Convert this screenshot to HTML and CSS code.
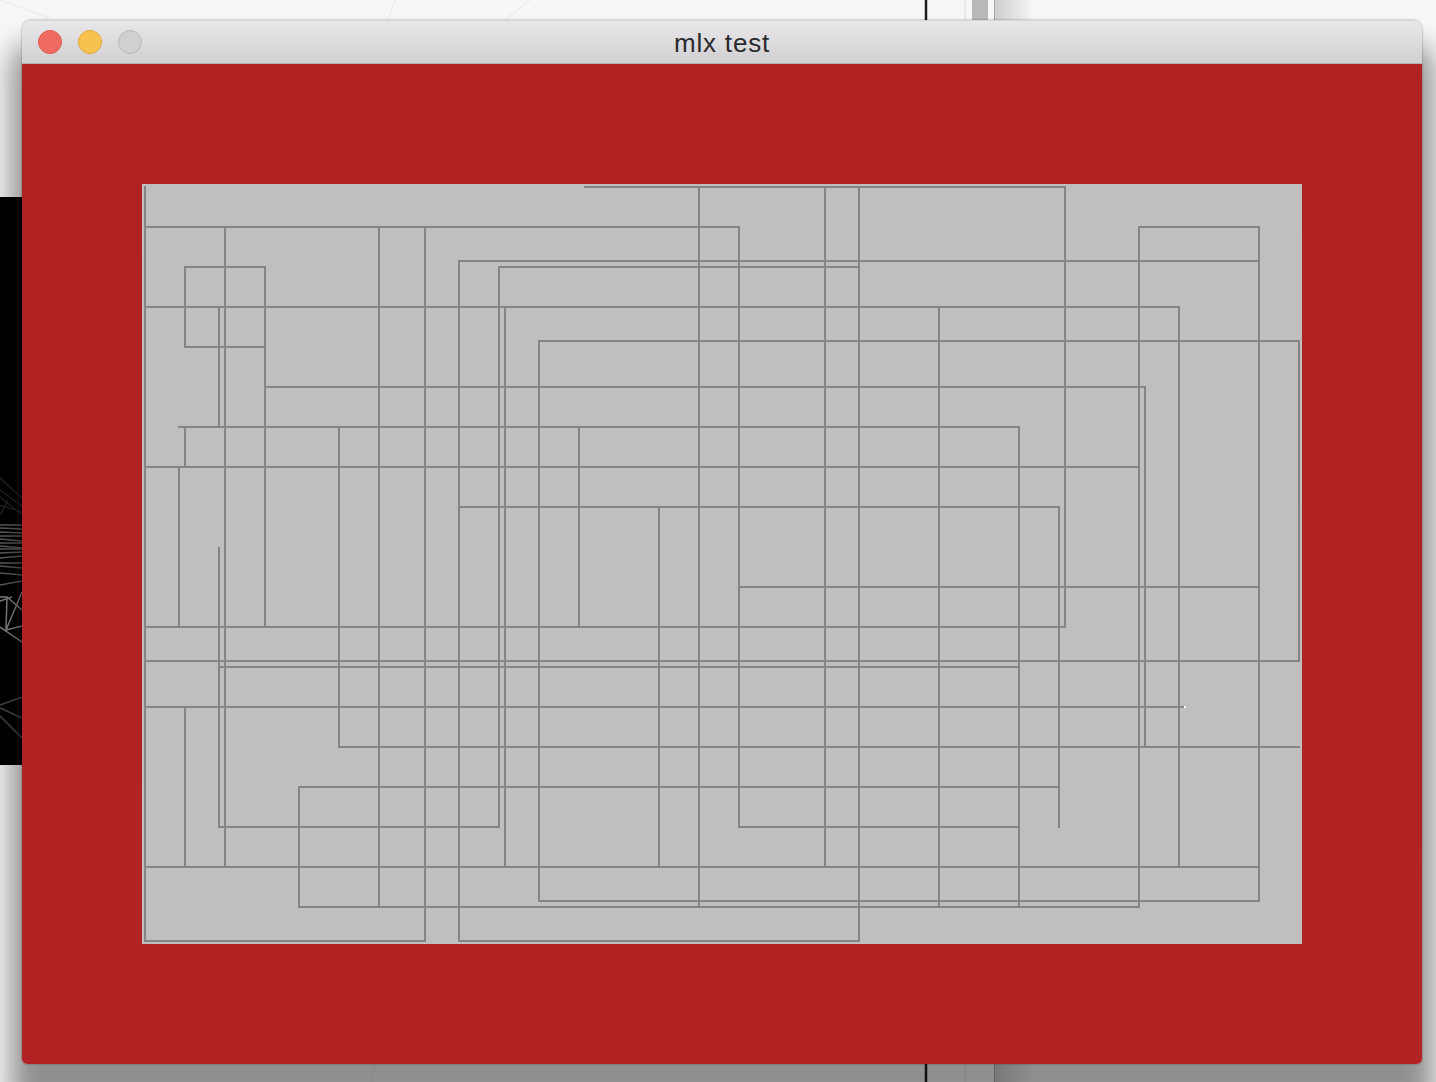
FILE: index.html
```html
<!DOCTYPE html>
<html lang="en">
<head>
<meta charset="utf-8">
<title>mlx test</title>
<link rel="stylesheet" href="styles.css">
</head>
<body>
<div class="desktop">
  <svg class="wallpaper" width="1436" height="1082" viewBox="0 0 1436 1082" aria-hidden="true">
    <path class="faint" d="M0 0L50 18M395 0L388 20M530 0L505 20M375 1064L372 1082"/>
    <rect class="bar" x="972" y="0" width="16" height="20"/>
    <path class="pale" d="M965 0V20M965 1064V1082"/>
    <path class="edge" d="M994.5 0V20M994.5 1064V1082"/>
    <path class="rule" d="M926 0V20M926 1064V1082"/>
    <rect class="night" x="0" y="197" width="22" height="568"/>
    <g class="wires">
      <path class="w1" d="M0 478L22 498M0 490L22 506M0 505L22 512M0 515L8 500M0 497L22 515"/>
      <path class="w2" d="M0 525H22M0 528L22 529M0 532L22 533M0 536H22M0 539L22 541M0 543H22M0 546L22 548M0 549H22M0 553L22 552M0 558L22 556M0 563H22M0 566L22 568M0 573L22 575M0 585L22 581"/>
      <path class="w3" d="M0 597H7L22 610M7 597L6 630L22 592M6 630L22 626M0 627L22 642M0 601L12 597"/>
      <path class="w4" d="M0 705L22 697M0 708L22 718M0 716L22 738"/>
    </g>
  </svg>
  <div class="fade fade-top"></div>
  <div class="fade fade-bottom"></div>
  <main class="window">
    <header class="titlebar">
      <div class="lights">
        <span class="light close"></span>
        <span class="light minimize"></span>
        <span class="light zoom"></span>
      </div>
      <h1 class="title">mlx test</h1>
    </header>
    <div class="content">
      <div class="canvas">
        <svg class="maze" width="1160" height="760" viewBox="142 184 1160 760" role="img" aria-label="maze">
          <path class="walls" d="M584 187H1066M144 227H740M1138 227H1260M458 261H1260M184 267H266M498 267H860M144 307H1180M538 341H1300M184 347H266M264 387H1146M178 427H1020M144 467H1140M458 507H1060M738 587H1260M144 627H1066M144 661H1300M218 667H1020M144 707H1184M338 747H1300M298 787H1060M218 827H500M738 827H1020M144 867H1260M538 901H1260M298 907H1140M144 941H426M458 941H860M145 186V942M179 467V627M185 267V347M185 427V467M185 707V867M219 307V427M219 547V828M225 227V867M265 267V627M299 786V908M339 427V748M379 227V907M425 227V942M459 261V942M499 266V828M505 307V867M539 340V902M579 427V627M659 507V867M699 187V907M739 226V828M825 187V867M859 187V942M939 306V907M1019 427V908M1059 506V828M1065 186V628M1139 226V908M1145 386V748M1179 306V867M1259 226V902M1299 340V662"/>
          <path class="spark" d="M1184 707H1186"/>
        </svg>
      </div>
    </div>
  </main>
</div>
</body>
</html>
```

FILE: styles.css
```css
html, body {
  margin: 0;
  padding: 0;
  height: 100%;
  overflow: hidden;
}

body {
  background: #f7f7f7;
  font-family: "Liberation Sans", Arial, sans-serif;
}

.desktop {
  position: relative;
  width: 1436px;
  height: 1082px;
  overflow: hidden;
}

.wallpaper {
  position: absolute;
  left: 0;
  top: 0;
  display: block;
}

.faint { fill: none; stroke: #efefef; stroke-width: 2; }
.bar { fill: #b9b9b9; }
.pale { fill: none; stroke: #dcdcdc; stroke-width: 1; }
.edge { fill: none; stroke: #a8a8a8; stroke-width: 1; }
.rule { fill: none; stroke: #1e1e1e; stroke-width: 2.5; }
.night { fill: #000; }

.wires path { fill: none; stroke: #fff; }
.wires .w1 { stroke-width: 1.2; opacity: .16; }
.wires .w2 { stroke-width: 1.5; opacity: .38; }
.wires .w3 { stroke-width: 1.5; opacity: .55; }
.wires .w4 { stroke-width: 1.5; opacity: .3; }

.fade {
  position: absolute;
  left: 995px;
  width: 40px;
  background: linear-gradient(to right, #cfcfcf, rgba(247, 247, 247, 0));
}

.fade-top { top: 0; height: 20px; }
.fade-bottom { top: 1064px; height: 18px; }

.desktop::after {
  content: "";
  position: absolute;
  left: 22px;
  top: 20px;
  width: 1400px;
  height: 1044px;
  border-radius: 9px 9px 5px 5px;
  box-shadow: 0 36px 28px 11px rgba(0, 0, 0, .42), 0 0 2px rgba(0, 0, 0, .45);
  pointer-events: none;
}

.window {
  position: absolute;
  z-index: 1;
  left: 22px;
  top: 20px;
  width: 1400px;
  height: 1044px;
  display: flex;
  flex-direction: column;
  border-radius: 9px 9px 5px 5px;
  overflow: hidden;
}

.titlebar {
  position: relative;
  flex: 0 0 44px;
  box-sizing: border-box;
  display: flex;
  align-items: center;
  justify-content: center;
  background: linear-gradient(#e9e7e9, #d1cfd1);
  border-top: 1px solid #d6d5d6;
  border-bottom: 1px solid #b4b3b4;
}

.lights {
  position: absolute;
  left: 16px;
  top: 9px;
  display: flex;
  gap: 16px;
}

.light {
  display: block;
  box-sizing: border-box;
  width: 24px;
  height: 24px;
  border-radius: 50%;
  border: 1px solid;
}

.close { background: #ef6b60; border-color: #dc5a50; }
.minimize { background: #f8c24f; border-color: #e2a73c; }
.zoom { background: #d0d0d0; border-color: #b9b9b9; }

.title {
  margin: 0;
  padding-top: 2px;
  font-size: 26px;
  font-weight: 400;
  line-height: 40px;
  letter-spacing: .8px;
  color: #2a2a2e;
}

.content {
  flex: 1;
  box-sizing: border-box;
  padding: 120px;
  display: flex;
  background: linear-gradient(#b02121, #b22323);
}

.canvas {
  flex: 1;
  background: #bfbfbf;
}

.maze {
  display: block;
}

.walls {
  fill: none;
  stroke: #848484;
  stroke-width: 2;
  shape-rendering: crispEdges;
}

.spark {
  fill: none;
  stroke: #fff;
  stroke-width: 2;
  shape-rendering: crispEdges;
}
```
